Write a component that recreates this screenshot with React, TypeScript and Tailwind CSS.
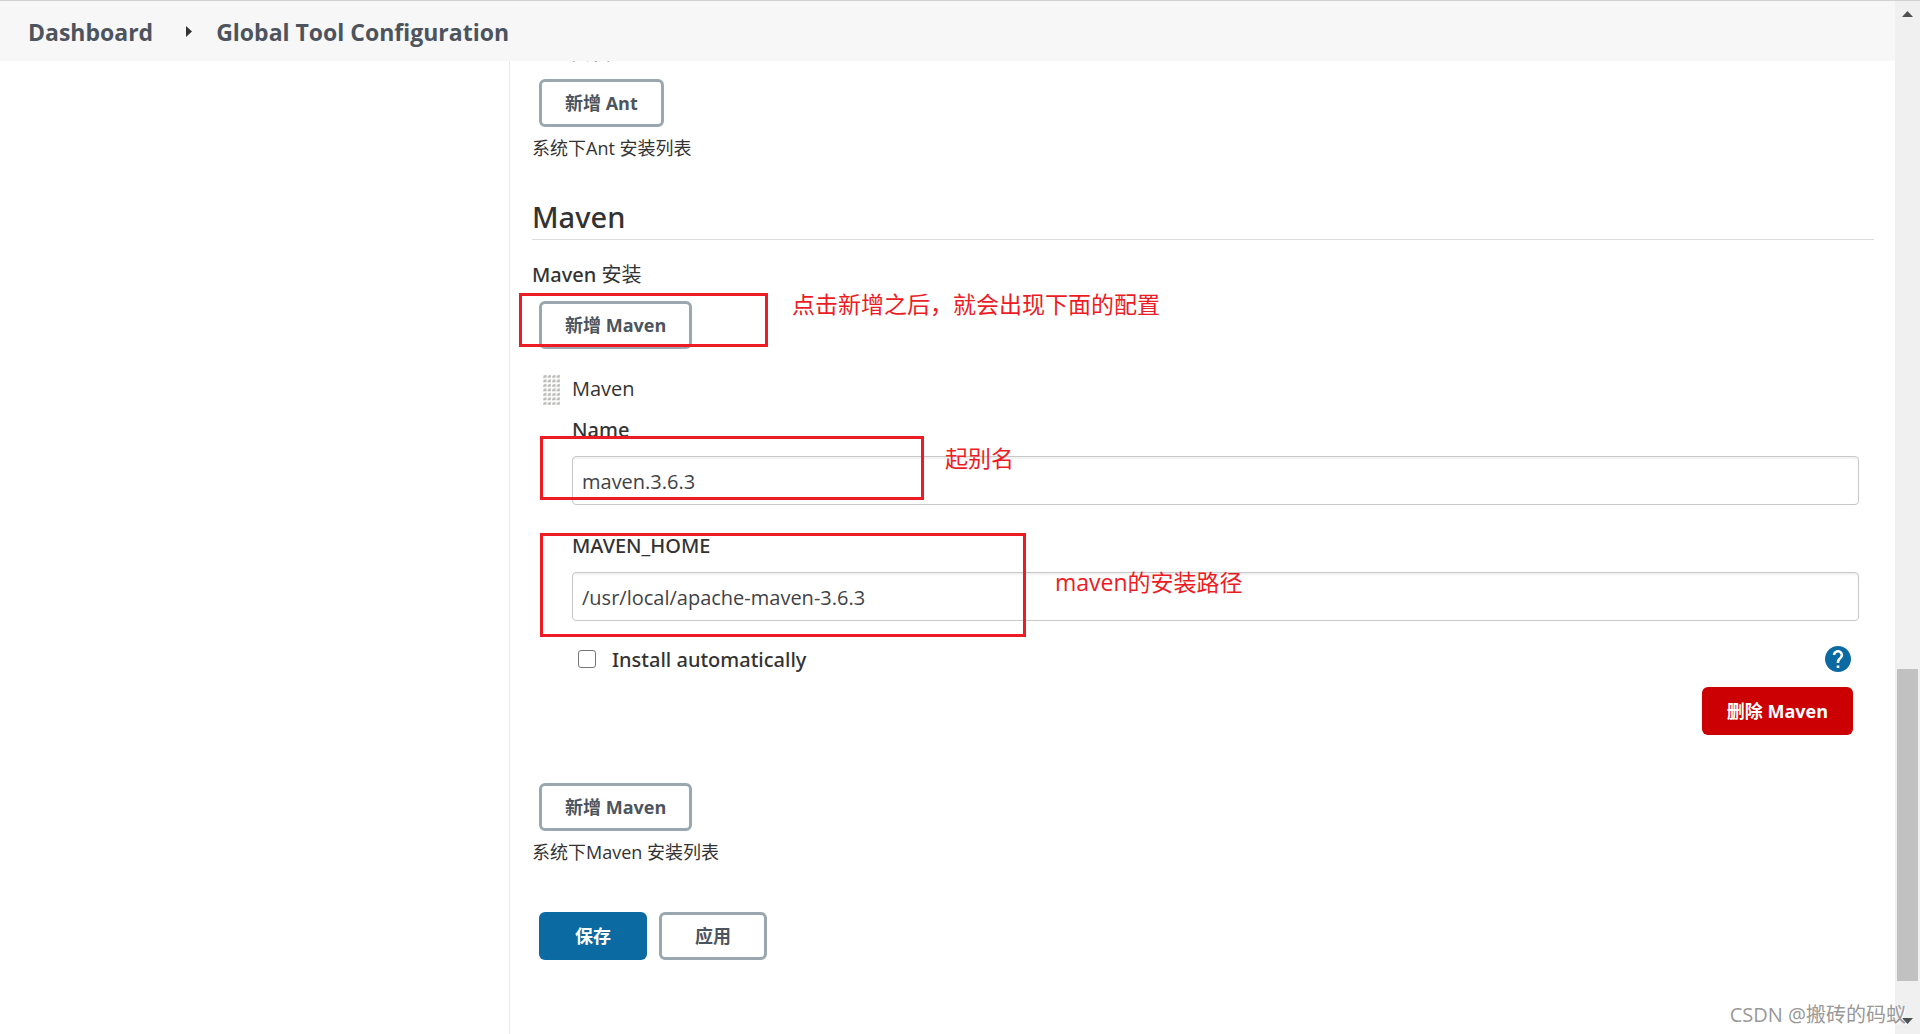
import type { ReactNode } from "react";

function OutlineButton({ children, className = "" }: { children: ReactNode; className?: string }) {
  return (
    <button
      type="button"
      className={`ml-[7px] block h-12 rounded-md border-3 border-[#9aa7af] bg-white px-[23px] text-lg leading-6 font-bold text-[#4d545d] ${className}`}
    >
      {children}
    </button>
  );
}

function Mark({ className }: { className: string }) {
  return <div className={`pointer-events-none absolute border-3 border-[#ed1c24] ${className}`} />;
}

function Note({ children, className }: { children: ReactNode; className: string }) {
  return (
    <p className={`pointer-events-none absolute text-[23px] leading-8 whitespace-nowrap text-[#ed1c24] ${className}`}>
      {children}
    </p>
  );
}

function Field({ id, label, value, children }: { id: string; label: string; value: string; children: ReactNode }) {
  return (
    <div className="relative">
      <label htmlFor={id} className="block font-['Noto_Sans','Noto_Sans_CJK_SC',sans-serif] text-xl leading-7 font-medium">
        {label}
      </label>
      <input
        id={id}
        type="text"
        defaultValue={value}
        className="mt-3 block h-[49px] w-full rounded border border-[#c8c8c8] bg-white px-[9px] pt-0.5 text-xl text-[#3f4347] shadow-[inset_0_2px_2px_rgba(0,0,0,0.06)] outline-none"
      />
      {children}
    </div>
  );
}

function Grip() {
  return (
    <svg width="17" height="31" viewBox="0 0 17 31" className="ml-[11px] shrink-0" aria-hidden="true">
      <defs>
        <pattern id="dots" width="4.5" height="4.5" patternUnits="userSpaceOnUse">
          <path d="M0 3.6 L0.6 1.6 L3.4 0.6 V3.9 H0Z" fill="#b8b8b4" />
        </pattern>
      </defs>
      <rect width="17" height="31" fill="url(#dots)" />
    </svg>
  );
}

function HelpIcon() {
  return (
    <svg width="26" height="26" viewBox="2 2 20 20" aria-hidden="true">
      <path
        fill="#0b6aa2"
        d="M12 2C6.48 2 2 6.48 2 12s4.48 10 10 10 10-4.48 10-10S17.52 2 12 2z"
      />
      <path
        fill="#fff"
        d="M13 19h-2v-2h2v2zm2.07-7.75l-.9.92C13.45 12.9 13 13.5 13 15h-2v-.5c0-1.100.45-2.100 1.170-2.830l1.240-1.260c.37-.36.59-.86.59-1.410 0-1.100-.9-2-2-2s-2 .9-2 2H8c0-2.210 1.790-4 4-4s4 1.790 4 4c0 .88-.36 1.680-.93 2.250z"
      />
    </svg>
  );
}

function Scrollbar() {
  return (
    <div className="relative flex w-[25px] shrink-0 flex-col items-center bg-[#f0f0f0]">
      <svg width="11" height="6" viewBox="0 0 11 6" className="mt-2.5 shrink-0" aria-hidden="true">
        <path d="M0 6 L5.5 0 L11 6Z" fill="#505050" />
      </svg>
      <div className="grow-[653]" />
      <div className="w-[21px] grow-[312] bg-[#c1c1c1]" />
      <div className="grow-[37]" />
      <svg width="11" height="6" viewBox="0 0 11 6" className="mb-2.5 shrink-0" aria-hidden="true">
        <path d="M0 0 L5.5 6 L11 0Z" fill="#505050" />
      </svg>
    </div>
  );
}

export default function App() {
  return (
    <div className="relative flex h-screen overflow-hidden border-t border-[#d0d0d0] bg-white font-['Open_Sans','Noto_Sans_CJK_SC',sans-serif] text-[#333]">
      <div className="flex min-w-0 flex-1 flex-col">
        <header className="z-10 flex h-15 shrink-0 items-center bg-[#f7f7f7] pt-0.5 pl-7 text-[23px] leading-8 font-bold text-[#4d545d]">
          <nav aria-label="Breadcrumb" className="flex items-center">
            <a href="#dashboard">Dashboard</a>
            <svg width="6" height="11" viewBox="0 0 6 11" className="mr-6 ml-[33px] -mt-0.5" aria-hidden="true">
              <path d="M0 0 L6 5.500 L0 11Z" fill="#333" />
            </svg>
            <a href="#tools">Global Tool Configuration</a>
          </nav>
        </header>

        <div className="flex min-h-0 flex-1">
          <aside className="w-[509px] shrink-0" />
          <main className="min-w-0 flex-1 overflow-hidden border-l border-[#eaeaea] pr-[21px] pl-[22px]">
            <section className="-mt-[22px]">
              <h3 className="font-['Noto_Sans','Noto_Sans_CJK_SC',sans-serif] text-xl leading-7 font-medium">
                Ant <span className="font-normal">安装</span>
              </h3>
              <OutlineButton className="mt-3">新增 Ant</OutlineButton>
              <p className="mt-[9px] text-lg leading-6">系统下Ant 安装列表</p>
            </section>

            <section>
              <h2 className="mt-[37px] border-b border-[#dcdcdc] pb-0.5 font-['Noto_Sans','Noto_Sans_CJK_SC',sans-serif] text-[29px] leading-10 font-medium">
                Maven
              </h2>
              <h3 className="mt-[21px] font-['Noto_Sans','Noto_Sans_CJK_SC',sans-serif] text-xl leading-7 font-medium">
                Maven <span className="font-normal">安装</span>
              </h3>
              <div className="relative mt-3">
                <OutlineButton>新增 Maven</OutlineButton>
                <Mark className="-top-2 -left-[13px] h-[54px] w-[249px]" />
                <Note className="-top-[13px] left-[260px]">点击新增之后，就会出现下面的配置</Note>
              </div>

              <div className="mt-[26px] flex h-7 items-center gap-3">
                <Grip />
                <span className="text-xl leading-7">Maven</span>
              </div>

              <div className="mt-[13px] mr-[15px] ml-10">
                <Field id="name" label="Name" value="maven.3.6.3">
                  <Mark className="top-5 -left-8 h-16 w-96" />
                  <Note className="top-[26px] left-[373px]">起别名</Note>
                </Field>
                <div className="h-[27px]" />
                <Field id="home" label="MAVEN_HOME" value="/usr/local/apache-maven-3.6.3">
                  <Mark className="top-px -left-8 h-[104px] w-[486px]" />
                  <Note className="top-[34px] left-[483px]">maven的安装路径</Note>
                </Field>
                <div className="mt-6 flex h-7 items-center pr-2 pl-1.5">
                  <input
                    id="auto"
                    type="checkbox"
                    className="size-[18px] appearance-none rounded-[3px] border border-[#767676] bg-white"
                  />
                  <label
                    htmlFor="auto"
                    className="ml-4 pt-0.5 font-['Noto_Sans','Noto_Sans_CJK_SC',sans-serif] text-xl leading-7 font-medium"
                  >
                    Install automatically
                  </label>
                  <button type="button" aria-label="Help" className="ml-auto">
                    <HelpIcon />
                  </button>
                </div>
                <button
                  type="button"
                  className="mt-3.5 mr-1.5 ml-auto block h-12 rounded-md bg-[#cc0003] px-[25px] text-lg leading-6 font-bold text-white"
                >
                  删除 Maven
                </button>
              </div>

              <OutlineButton className="mt-12">新增 Maven</OutlineButton>
              <p className="mt-[9px] text-lg leading-6">系统下Maven 安装列表</p>
            </section>

            <div className="mt-12 ml-[7px] flex gap-3">
              <button
                type="submit"
                className="h-12 w-[108px] rounded-md bg-[#0b6aa2] text-lg leading-6 font-bold text-white"
              >
                保存
              </button>
              <button
                type="button"
                className="h-12 w-[108px] rounded-md border-3 border-[#9aa7af] bg-white text-lg leading-6 font-bold text-[#4d545d]"
              >
                应用
              </button>
            </div>
          </main>
        </div>
      </div>
      <Scrollbar />
      <p className="pointer-events-none absolute right-3.5 bottom-[5px] text-xl leading-7 whitespace-nowrap text-[#999] [text-shadow:1px_1px_1px_#fff]">
        CSDN @搬砖的码蚁
      </p>
    </div>
  );
}
